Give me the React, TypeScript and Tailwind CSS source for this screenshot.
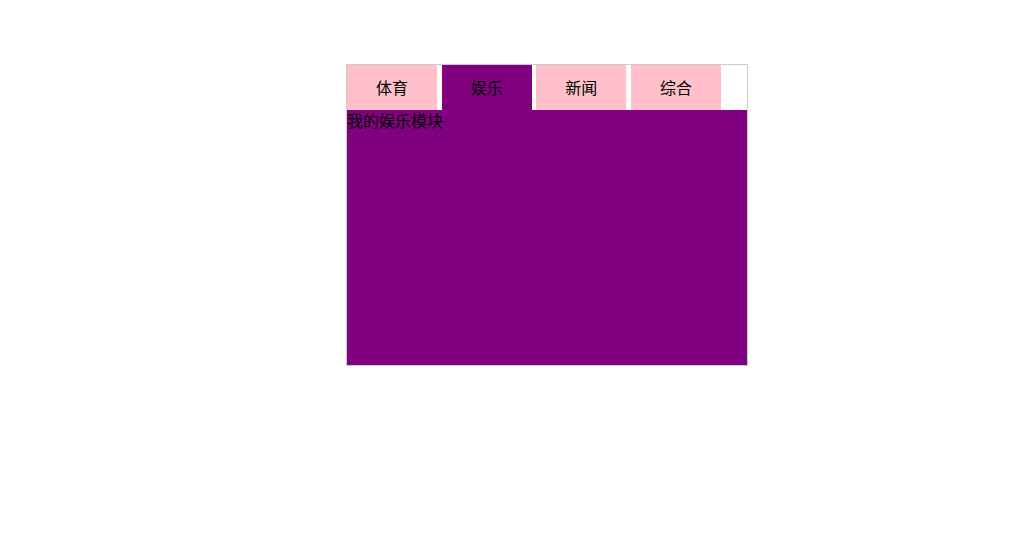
import { useState } from "react";

const tabs = [
  { name: "体育", content: "我的体育模块" },
  { name: "娱乐", content: "我的娱乐模块" },
  { name: "新闻", content: "我的新闻模块" },
  { name: "综合", content: "我的综合模块" },
];

const App = () => {
  const [active, setActive] = useState(1);

  return (
    <div className="min-h-[550px] bg-white pt-16 pl-[346px] text-black font-['Noto_Sans_CJK_SC','Noto_Sans',sans-serif] text-base">
      {/* Tab box */}
      <div className="w-[402px] h-[302px] border border-[#cccccc] flex flex-col">
        <ul className="flex gap-[4.67px] h-[45px]">
          {tabs.map((t, i) => (
            <li
              key={t.name}
              onClick={() => setActive(i)}
              className={
                i === active
                  ? "w-[90px] h-[45px] leading-[45px] text-center cursor-pointer bg-[#800080]"
                  : "w-[90px] h-[45px] leading-[45px] text-center cursor-pointer bg-[#ffc0cb]"
              }
            >
              {t.name}
            </li>
          ))}
        </ul>
        <div className="flex-1 bg-[#800080] leading-[20px]">{tabs[active].content}</div>
      </div>
    </div>
  );
};

export default App;
